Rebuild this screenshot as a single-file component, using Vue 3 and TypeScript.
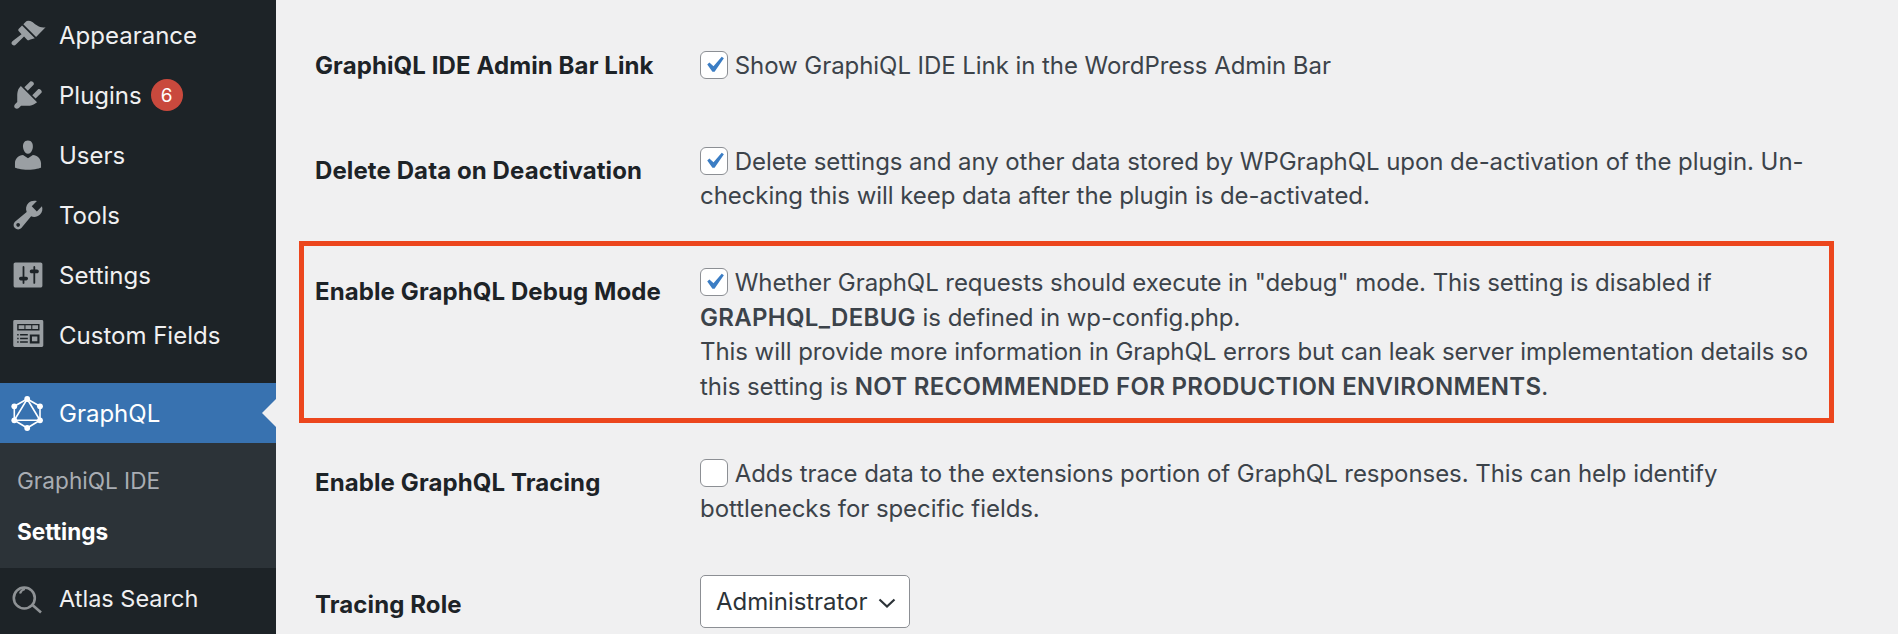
<script setup lang="ts">
interface Item { name: string; path: string; badge?: string }
const items: Item[] = [
  { name: 'Appearance', path: 'M14.48 11.06L7.41 3.99l1.5-1.5c.5-.56 2.3-.47 3.51.32 1.21.8 1.43 1.28 2.91 2.1 1.18.64 2.45 1.26 4.45.85zM13.77 11.77L6.7 4.7 4.9 6.5c-.4.4-.4 1 0 1.4L6.4 9.600 1.500 13.300c-.9.7-.8 1.500-.2 2.100s1.400.6 2-.1L7.800 10.900l1.700 1.700c.4.4 1 .4 1.400 0z' },
  { name: 'Plugins', badge: '6', path: 'M13.11 4.36L9.87 7.6 8 5.73l3.24-3.24c.35-.34 1.05-.2 1.56.32.52.51.66 1.21.31 1.55zm-8 1.77l.91-1.12 9.01 9.01-1.19.84c-.71.71-2.63 1.16-3.82 1.16H6.14L4.9 17.26c-.59.59-1.54.59-2.12 0-.59-.58-.59-1.53 0-2.12l1.24-1.24v-3.88c0-1.13.4-3.19 1.09-3.89zm7.26 3.97l3.24-3.24c.34-.35 1.04-.21 1.55.31.52.51.66 1.21.31 1.55l-3.24 3.25z' },
  { name: 'Users', path: 'M10 9.25c-2.27 0-2.73-3.44-2.73-3.44C7 4.02 7.82 2 9.97 2c2.16 0 2.98 2.02 2.71 3.81 0 0-.41 3.44-2.68 3.44zm0 2.57L12.72 10c2.39 0 4.52 2.33 4.52 4.53v2.49s-3.65 1.13-7.24 1.13c-3.65 0-7.24-1.13-7.24-1.13v-2.49c0-2.25 1.94-4.48 4.47-4.48z' },
  { name: 'Tools', path: 'M16.68 9.77c-1.34 1.34-3.3 1.67-4.95.99l-5.41 6.52c-.99.99-2.59.99-3.58 0s-.99-2.59 0-3.57l6.52-5.42c-.68-1.65-.35-3.61.99-4.95 1.28-1.28 3.12-1.62 4.72-1.06l-2.89 2.89 2.82 2.82 2.86-2.87c.53 1.58.18 3.39-1.08 4.65zM3.81 16.21c.4.39 1.04.39 1.43 0 .4-.4.4-1.04 0-1.43-.39-.4-1.03-.4-1.43 0-.39.39-.39 1.03 0 1.43z' },
  { name: 'Settings', path: 'M18 16V4c0-.55-.45-1-1-1H3c-.55 0-1 .45-1 1v12c0 .55.45 1 1 1h13.99c.55 0 1.01-.45 1.01-1zM8 11h1c.55 0 1 .45 1 1s-.45 1-1 1H8v1.5c0 .28-.22.5-.5.5s-.5-.22-.5-.5V13H6c-.55 0-1-.45-1-1s.45-1 1-1h1V5.5c0-.28.22-.5.5-.5s.5.22.5.5V11zm5-2h-1c-.55 0-1-.45-1-1s.45-1 1-1h1V5.5c0-.28.22-.5.5-.5s.5.22.5.5V7h1c.55 0 1 .45 1 1s-.45 1-1 1h-1v5.5c0 .28-.22.5-.5.5s-.5-.22-.5-.5V9z' },
  { name: 'Custom Fields', path: 'M2.600 1.700h15.100a.8.8 0 0 1 .8.8v13.400a.8.8 0 0 1-.8.8H2.600a.8.8 0 0 1-.8-.8V2.500a.8.8 0 0 1 .8-.8zM4 3.900h12.400v3.600H4zM4.800 4.600h3.200v2.100H4.800zM8.600 4.600h3.200v2.100H8.600zM12.400 4.600h3.200v2.100h-3.200zM4 9.500h.8v.8H4zM5.600 9.500h4.300v.8H5.600zM4 11.500h.8v.8H4zM5.600 11.500h4.300v.8H5.600zM4 13.500h.8v.8H4zM5.600 13.500h4.300v.8H5.600zM11 9.700h5.400v5H11zM12.200 10.900h3v2.600h-3z' }
]
const check = 'M14.83 4.89l1.34.94-5.81 8.38H9.02L5.78 9.67l1.34-1.25 2.57 2.4z'
</script>

<template>
  <div class="page">
    <nav class="side">
      <div v-for="it in items" :key="it.name" class="item">
        <svg class="ico" viewBox="0 0 20 20"><path :d="it.path" fill-rule="evenodd" /></svg>
        <span>{{ it.name }}</span>
        <span v-if="it.badge" class="badge">{{ it.badge }}</span>
      </div>
      <div class="item active">
        <svg class="ico" viewBox="0 0 36 36">
          <g fill="none" stroke="#fff" stroke-width="1.6">
            <polygon points="17.200,4 30,11.300 30,25.300 17.200,33 4.300,25.300 4.300,11.300" />
            <polygon points="17.200,4 30,25.300 4.300,25.300" />
          </g>
          <g fill="#fff">
            <circle cx="17.200" cy="4" r="2.900" /><circle cx="30" cy="11.300" r="2.900" /><circle cx="30" cy="25.300" r="2.900" />
            <circle cx="17.200" cy="33" r="2.900" /><circle cx="4.300" cy="25.300" r="2.900" /><circle cx="4.300" cy="11.300" r="2.900" />
          </g>
        </svg>
        <span>GraphQL</span>
        <i class="notch"></i>
      </div>
      <div class="sub">
        <div class="subitem">GraphiQL IDE</div>
        <div class="subitem current">Settings</div>
      </div>
      <div class="item atlas">
        <svg class="ico" viewBox="0 0 36 36">
          <g fill="none" stroke="#8e9295">
            <circle cx="14.300" cy="18" r="10.500" stroke-width="2.600" />
            <path d="M10 13.500a7 7 0 0 1 5-4.500" stroke-width="2.200" />
            <path d="M22.500 25l8.500 7.500" stroke-width="2.600" />
          </g>
        </svg>
        <span>Atlas Search</span>
      </div>
    </nav>

    <main class="main">
      <section class="row r1">
        <div class="label first">GraphiQL IDE Admin Bar Link</div>
        <div class="field">
          <span class="box"><svg viewBox="0 0 20 20"><path :d="check" /></svg></span>
          Show GraphiQL IDE Link in the WordPress Admin Bar
        </div>
      </section>
      <section class="row r2">
        <div class="label">Delete Data on Deactivation</div>
        <div class="field">
          <span class="box"><svg viewBox="0 0 20 20"><path :d="check" /></svg></span>
          Delete settings and any other data stored by WPGraphQL upon de-activation of the plugin. Un-checking this will keep data after the plugin is de-activated.
        </div>
      </section>
      <section class="row r3">
        <div class="label">Enable GraphQL Debug Mode</div>
        <div class="field">
          <span class="box"><svg viewBox="0 0 20 20"><path :d="check" /></svg></span>
          Whether GraphQL requests should execute in "debug" mode. This setting is disabled if <b>GRAPHQL_DEBUG</b> is defined in wp-config.php.<br />
          This will provide more information in GraphQL errors but can leak server implementation details so this setting is <b>NOT RECOMMENDED FOR PRODUCTION ENVIRONMENTS</b>.
        </div>
      </section>
      <section class="row r4">
        <div class="label">Enable GraphQL Tracing</div>
        <div class="field">
          <span class="box"></span>
          Adds trace data to the extensions portion of GraphQL responses. This can help identify bottlenecks for specific fields.
        </div>
      </section>
      <section class="row r5">
        <div class="label tall">Tracing Role</div>
        <div class="select">
          <span>Administrator</span>
          <svg viewBox="0 0 18 10" width="18" height="10"><path d="M1.500 1.500L9 8.500l7.500-7" fill="none" stroke="#2c3338" stroke-width="2.200" /></svg>
        </div>
      </section>
    </main>
  </div>
</template>

<style>
html, body { margin: 0; overflow: hidden; }
</style>

<style scoped>
.page {
  display: flex;
  width: 1898px;
  height: 634px;
  overflow: hidden;
  background: #f0f0f1;
  font-family: Inter, "Liberation Sans", sans-serif;
  font-size: 24px;
}
.side {
  width: 276px;
  flex: none;
  box-sizing: border-box;
  padding-top: 5px;
  background: #1d2327;
  color: #f0f0f1;
  display: flex;
  flex-direction: column;
}
.item {
  position: relative;
  height: 60px;
  flex: none;
  display: flex;
  align-items: center;
  padding-left: 10px;
  box-sizing: border-box;
}
.atlas { font-size: 23.500px; }
.ico {
  width: 36px;
  height: 36px;
  margin-right: 13px;
  fill: #9a9fa3;
  flex: none;
}
.badge {
  width: 32px;
  height: 32px;
  margin-left: 9px;
  border-radius: 50%;
  background: #c9493d;
  color: #fff;
  font-size: 19px;
  display: flex;
  align-items: center;
  justify-content: center;
}
.active {
  margin-top: 18px;
  background: #3872b0;
  color: #fff;
}
.notch {
  position: absolute;
  right: 0;
  top: 16px;
  border: 14px solid transparent;
  border-left-width: 0;
  border-right-color: #f0f0f1;
}
.sub {
  flex: none;
  box-sizing: border-box;
  height: 125px;
  padding: 12px 0 11px 17px;
  background: #2c3338;
  color: #a9adb3;
  font-size: 22.600px;
}
.subitem {
  height: 51px;
  line-height: 51px;
}
.current {
  color: #fff;
  font-weight: 700;
}
.main {
  flex: 1;
  min-width: 0;
  padding: 49px 64px 0 23px;
}
.row {
  display: grid;
  grid-template-columns: 385px 1fr;
  padding: 0 19px 0 16px;
  line-height: 34.500px;
  color: #3c434a;
  letter-spacing: -0.060px;
}
.r2 { margin-top: 61px; }
.r3 {
  margin-top: 27.500px;
  padding: 20px 14px 14px 11px;
  border: 5px solid #ec461d;
}
.r4 { margin-top: 34px; }
.r5 { margin-top: 49px; }
.label {
  padding-top: 9px;
  color: #1d2327;
  font-weight: 700;
  letter-spacing: 0.100px;
}
.label.first { padding-top: 0; }
.label.tall { padding-top: 13px; }
.field b {
  font-weight: 600;
  letter-spacing: 0.300px;
}
.box {
  display: inline-block;
  box-sizing: border-box;
  width: 28px;
  height: 28px;
  margin-right: 0;
  vertical-align: -5px;
  background: #fff;
  border: 1px solid #8c8f94;
  border-radius: 6px;
}
.box svg {
  display: block;
  width: 32px;
  height: 32px;
  margin: -3px;
  fill: #3b7dc4;
}
.select {
  box-sizing: border-box;
  width: 210px;
  height: 53px;
  padding: 2px 13px 0 15px;
  display: flex;
  align-items: center;
  justify-content: space-between;
  background: #fff;
  border: 1px solid #8c8f94;
  border-radius: 5px;
  color: #2c3338;
}
</style>
